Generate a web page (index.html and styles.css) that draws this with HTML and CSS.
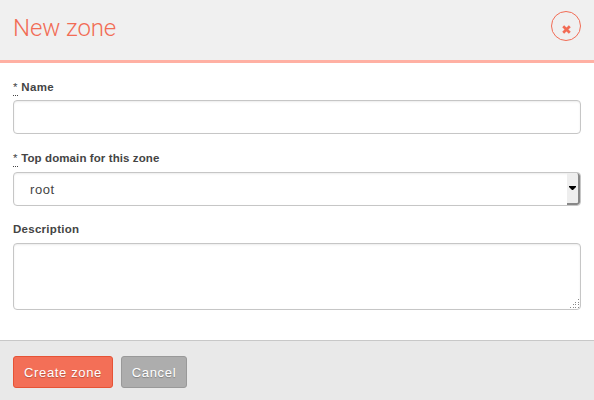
FILE: index.html
```html
<!DOCTYPE html>
<html lang="en">
<head>
<meta charset="utf-8">
<title>New zone</title>
<link rel="stylesheet" href="styles.css">
</head>
<body>
<form class="modal">
  <header class="modal-header">
    <h1 class="title">New zone</h1>
    <button class="close" type="button" aria-label="Close">
      <svg class="close-icon" viewBox="0 0 9 9"><path d="M1.2 1.2 7.8 7.8M7.8 1.2 1.2 7.8"/></svg>
    </button>
  </header>
  <div class="modal-body">
    <label class="label name-label" for="name"><abbr class="required">*</abbr> <span class="name-text">Name</span></label>
    <input class="control" id="name" type="text">
    <label class="label" for="domain"><abbr class="required">*</abbr> <span class="domain-text">Top domain for this zone</span></label>
    <div class="control select" id="domain">
      <span class="select-value">root</span>
      <span class="select-button"><svg class="arrow" viewBox="0 0 7 4"><path d="M0 0h7v1L4 4H3L0 1z"/></svg></span>
    </div>
    <label class="label description-label" for="description">Description</label>
    <div class="textarea-wrap">
      <textarea class="control textarea" id="description"></textarea>
      <svg class="grip" viewBox="0 0 10 10"><path d="M8 0h1v1h-1zM8 3h1v1h-1zM5 3h1v1h-1zM8 5h1v1h-1zM3 5h1v1h-1zM5 5h1v1h-1zM8 8h1v1h-1zM5 8h1v1h-1zM3 8h1v1h-1zM0 8h1v1h-1z"/></svg>
    </div>
  </div>
  <footer class="modal-footer">
    <button class="button primary" type="button">Create zone</button>
    <button class="button secondary" type="button">Cancel</button>
  </footer>
</form>
</body>
</html>
```
FILE: styles.css
```css
* { box-sizing: border-box; }
body { margin: 0; background: #fff; color: #444; font-family: "Liberation Sans", Arial, sans-serif; }
.modal { display: flex; flex-direction: column; height: 400px; overflow: hidden; }
.modal-header { display: flex; justify-content: space-between; height: 63px; padding: 11px 13px 0; background: #f0f0f0; border-bottom: 3px solid #ffb0a3; }
.title { margin: 0; padding-top: 1px; font: 300 24px/32px Roboto, sans-serif; letter-spacing: -.1px; color: #f26c55; }
.close { display: flex; align-items: center; justify-content: center; width: 30px; height: 30px; padding: 6px 0 0; background: none; border: 1px solid #f26c55; border-radius: 50%; }
.close-icon { width: 9px; height: 9px; fill: none; stroke: #f26c55; stroke-width: 2.7; }
.modal-body { flex: 1; padding: 15px 13px 0; }
.label { display: block; height: 23px; font-size: 11.5px; font-weight: bold; line-height: 18px; white-space: nowrap; }
.name-label { height: 22px; }
.name-text { letter-spacing: .4px; }
.domain-text { letter-spacing: .1px; }
.description-label { letter-spacing: .28px; }
.required { display: inline-block; width: 5px; height: 18px; font-weight: normal; border-bottom: 1px dotted #444; }
.control { display: block; width: 100%; height: 34px; margin: 0 0 15px; border: 1px solid #c6c6c6; border-radius: 4px; background: #fff; box-shadow: inset 0 1px 2px #00000014; outline: 0; }
.select { display: flex; justify-content: space-between; margin-bottom: 14px; padding: 0 0 0 16px; overflow: hidden; }
.select-value { font-size: 13px; line-height: 34px; letter-spacing: .6px; }
.select-button { display: flex; align-items: center; justify-content: center; width: 13px; background: #eee; border-right: 2px solid #888; border-bottom: 2px solid #888; border-radius: 0 3px 3px 0; }
.arrow { width: 7px; height: 4px; fill: #000; }
.textarea-wrap { position: relative; }
.textarea { height: 67px; resize: none; }
.grip { position: absolute; right: 1px; bottom: 1px; width: 10px; height: 10px; fill: #888; shape-rendering: crispEdges; }
.modal-footer { display: flex; gap: 8px; height: 60px; padding: 15px 13px; background: #e9e9e9; border-top: 1px solid #c8c8c8; }
.button { height: 32px; padding: 1px 0 0; border: 1px solid; border-radius: 3px; color: #fff; font: 13px/29px "Liberation Sans", Arial, sans-serif; letter-spacing: .65px; text-shadow: 0 1px 1px #0004; }
.primary { width: 100px; background: #f36f57; border-color: #e65336; }
.secondary { width: 66px; background: #adadad; border-color: #999; }
```
